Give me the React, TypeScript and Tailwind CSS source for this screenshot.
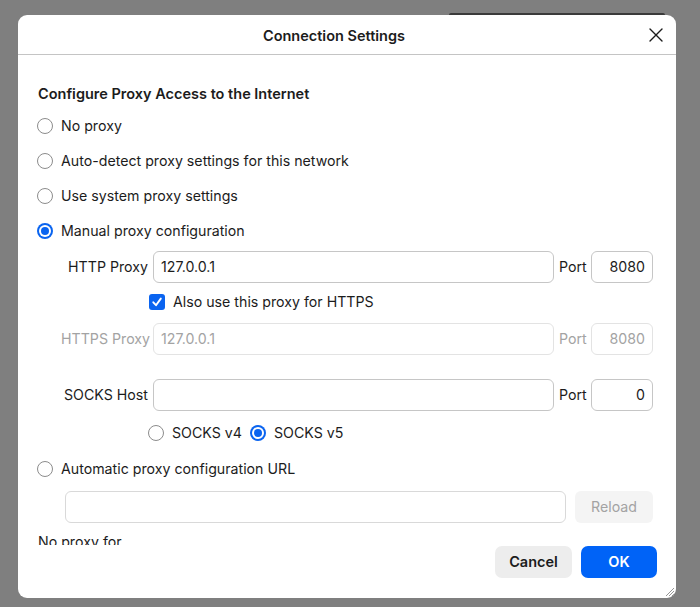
import React from "react";

function Radio({ checked }: { checked?: boolean }) {
  if (checked) {
    return (
      <span className="flex h-[16px] w-[16px] shrink-0 items-center justify-center rounded-full bg-[#0a64f0]">
        <span className="flex h-[12px] w-[12px] items-center justify-center rounded-full bg-white">
          <span className="h-[8px] w-[8px] rounded-full bg-[#0a64f0]" />
        </span>
      </span>
    );
  }
  return <span className="h-[16px] w-[16px] shrink-0 rounded-full border border-[#8c8c8c] bg-white" />;
}

function RadioRow({ label, checked }: { label: string; checked?: boolean }) {
  return (
    <div className="flex h-[35px] items-center gap-[8px] pl-[19px]">
      <Radio checked={checked} />
      <span>{label}</span>
    </div>
  );
}

function ProxyRow({
  label,
  value,
  port,
  disabled,
  className,
}: {
  label: string;
  value: string;
  port: string;
  disabled?: boolean;
  className?: string;
}) {
  const txt = disabled ? "text-[#a3a3a3]" : "text-[#1c1c1c]";
  const border = disabled ? "border-[#e3e3e3]" : "border-[#c6c6c6]";
  return (
    <div className={"flex h-[32px] items-center pl-[43px] pr-[23px] " + (className ?? "")}>
      <span className={"w-[87px] shrink-0 whitespace-nowrap text-right " + txt}>{label}</span>
      <div className={"ml-[5px] flex h-[32px] flex-1 items-center rounded-[6px] border bg-white px-[7px] " + border + " " + txt}>
        {value}
      </div>
      <span className={"ml-[5px] w-[29px] shrink-0 " + txt}>Port</span>
      <div className={"ml-[3px] flex h-[32px] w-[62px] shrink-0 items-center justify-end rounded-[6px] border bg-white px-[7px] " + border + " " + txt}>
        {port}
      </div>
    </div>
  );
}

export default function App() {
  return (
    <div
      className="relative h-[607px] w-[700px] overflow-hidden bg-[#7f7f7f] pl-[18px] pt-[15px] text-[14.2px] leading-[20px] text-[#1c1c1c]"
      style={{ fontFamily: "Inter, 'Noto Sans', sans-serif" }}
    >
      <div className="absolute left-[449px] top-[13px] h-[2px] w-[216px] rounded-t-[2px] bg-[#3a3a3a]" />
      <div className="relative flex h-[583px] w-[658px] flex-col overflow-hidden rounded-[9px] bg-white">
        <div className="relative flex h-[40px] shrink-0 items-center justify-center border-b border-[#c4c4c4] pr-[26px] pt-[3px]">
          <span className="text-[14.5px] font-semibold">Connection Settings</span>
          <svg className="absolute right-[13px] top-[13px]" width="14" height="14" viewBox="0 0 14 14">
            <path d="M1 1 L13 13 M13 1 L1 13" stroke="#1c1c1c" strokeWidth="1.4" strokeLinecap="round" />
          </svg>
        </div>
        <div className="h-[490px] shrink-0 overflow-hidden">
          <div className="pl-[20px] pt-[29px] text-[14.5px] font-semibold">Configure Proxy Access to the Internet</div>
          <div className="mt-[4px]">
            <RadioRow label="No proxy" />
            <RadioRow label="Auto-detect proxy settings for this network" />
            <RadioRow label="Use system proxy settings" />
            <RadioRow label="Manual proxy configuration" checked />
          </div>
          <ProxyRow className="mt-[3px]" label="HTTP Proxy" value="127.0.0.1" port="8080" />
          <div className="mt-[9px] flex h-[20px] items-center gap-[8px] pl-[131px]">
            <span className="flex h-[16px] w-[16px] items-center justify-center rounded-[3px] bg-[#0a64f0]">
              <svg width="12" height="12" viewBox="0 0 12 12">
                <path d="M2.3 6.3 L5 9.2 L9.8 2.6" fill="none" stroke="white" strokeWidth="1.9" strokeLinecap="round" strokeLinejoin="round" />
              </svg>
            </span>
            <span>Also use this proxy for HTTPS</span>
          </div>
          <ProxyRow className="mt-[11px]" label="HTTPS Proxy" value="127.0.0.1" port="8080" disabled />
          <ProxyRow className="mt-[24px]" label="SOCKS Host" value="" port="0" />
          <div className="mt-[12px] flex h-[20px] items-center pl-[130px]">
            <Radio />
            <span className="ml-[8px]">SOCKS v4</span>
            <span className="ml-[8px]">
              <Radio checked />
            </span>
            <span className="ml-[8px]">SOCKS v5</span>
          </div>
          <div className="mt-[16px] flex h-[20px] items-center gap-[8px] pl-[19px]">
            <Radio />
            <span>Automatic proxy configuration URL</span>
          </div>
          <div className="mt-[12px] flex h-[32px] items-center gap-[9px] pl-[47px] pr-[23px]">
            <div className="h-[32px] flex-1 rounded-[6px] border border-[#d9d9d9] bg-white" />
            <div className="flex h-[32px] w-[78px] items-center justify-center rounded-[6px] bg-[#f4f4f4] text-[#a3a3a3]">
              Reload
            </div>
          </div>
          <div className="mt-[9px] pl-[20px]">No proxy for</div>
        </div>
        <div className="flex flex-1 items-start justify-end gap-[9px] pr-[19px] pt-[1px]">
          <div className="flex h-[32px] w-[77px] items-center justify-center rounded-[7px] bg-[#ededed] text-[14.5px] font-semibold">
            Cancel
          </div>
          <div className="flex h-[32px] w-[76px] items-center justify-center rounded-[7px] bg-[#0063f7] text-[14.5px] font-semibold text-white">
            OK
          </div>
        </div>
        <svg className="absolute bottom-[1px] right-[1px]" width="12" height="12" viewBox="0 0 12 12">
          <path d="M11 3 L3 11 M11 6 L6 11 M11 9 L9 11" stroke="#8a8a8a" strokeWidth="0.9" />
        </svg>
      </div>
    </div>
  );
}
